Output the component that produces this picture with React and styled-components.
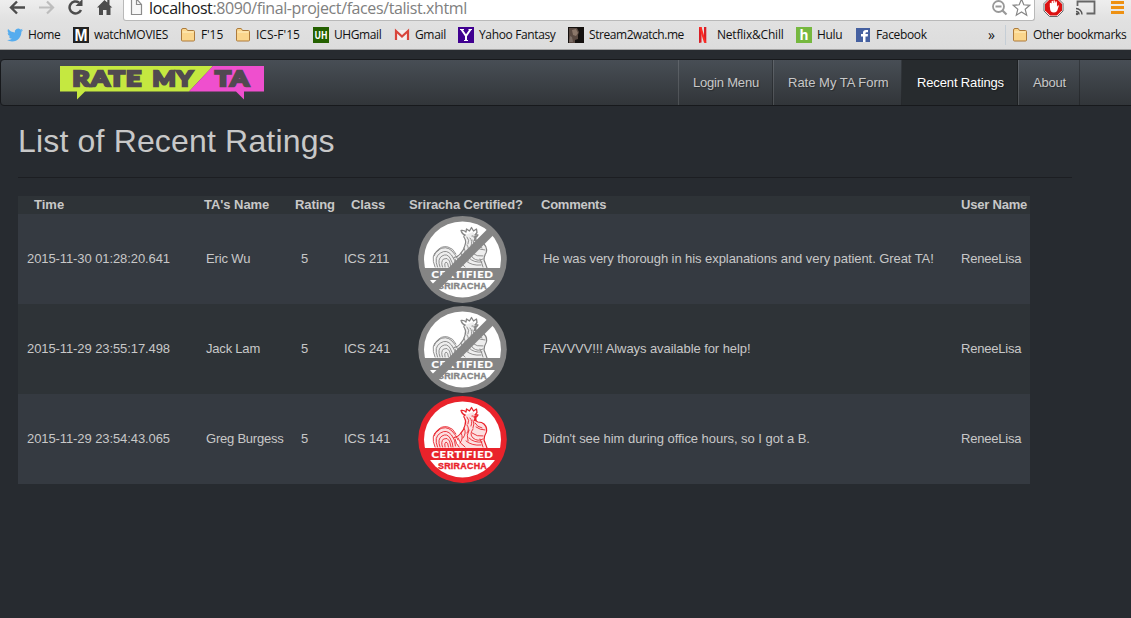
import React from "react";
import styled, { createGlobalStyle } from "styled-components";

const Global = createGlobalStyle`
  * { box-sizing: border-box; }
  body {
    margin: 0;
    background: #272b30;
    color: #c8c8c8;
    font-family: "Liberation Sans", Arial, sans-serif;
    font-size: 13px;
    overflow: hidden;
  }
`;

const Page = styled.div`
  width: 1131px;
  height: 618px;
  overflow: hidden;
`;

const Chrome = styled.header`
  height: 50px;
  display: flex;
  flex-direction: column;
  background: linear-gradient(#eeeeee, #e1e1e1 42%, #dcdcdc);
  border-bottom: 1px solid #a2a2a2;
  font-family: "Open Sans", "Noto Sans", sans-serif;
  color: #111;
`;

const Toolbar = styled.div`
  display: flex;
  height: 21px;
`;

const ToolGroup = styled.div`
  width: ${(p) => p.$width}px;
  flex: none;
  svg { display: block; }
`;

const AddressBar = styled.div`
  width: 912px;
  height: 21px;
  flex: none;
  display: flex;
  background: #fff;
  border: 1px solid #b9b9b9;
  border-top: 0;
  border-radius: 0 0 3px 3px;
`;

const Url = styled.div`
  flex: 1;
  font-size: 16px;
  line-height: 16px;
  letter-spacing: -0.4px;
  white-space: nowrap;
  color: #808080;
  b { font-weight: 400; color: #1a1a1a; }
`;

const Bookmarks = styled.nav`
  display: flex;
  height: 28px;
  padding-left: 7px;
  align-items: center;
`;

const Bookmark = styled.div`
  width: ${(p) => p.$width}px;
  flex: none;
  display: flex;
  align-items: center;
  gap: 5px;
  font-size: 12px;
  line-height: 18px;
  white-space: nowrap;
  letter-spacing: ${(p) => p.$track || 0}px;
  svg { flex: none; }
`;

const Chevron = styled.span`
  width: 17px;
  font-size: 14px;
  line-height: 20px;
`;

const Separator = styled.span`
  width: 1px;
  height: 20px;
  margin-right: 6px;
  background: #c5ced6;
`;

const Navbar = styled.nav`
  display: flex;
  height: 47px;
  margin: 9px -6px 0 0;
  padding-left: 59px;
  background: linear-gradient(#484e55, #3a3f44 60%, #313539);
  border: 1px solid #17191c;
  border-radius: 4px;
`;

const Brand = styled.div`
  width: 618px;
  padding-top: 6px;
  svg { display: block; }
`;

const NavItem = styled.a`
  width: ${(p) => p.$width}px;
  padding-left: 14px;
  line-height: 45px;
  white-space: nowrap;
  letter-spacing: ${(p) => p.$track || 0}px;
  color: ${(p) => (p.$active ? "#fff" : "#c8c8c8")};
  background: ${(p) => (p.$active ? "#272b2e" : "transparent")};
  border-left: 1px solid ${(p) => (p.$active ? "#272b2e" : "rgba(255,255,255,.13)")};
  border-right: 1px solid rgba(0, 0, 0, 0.25);
  text-shadow: 1px 1px 1px rgba(0, 0, 0, 0.3);
`;

const Content = styled.main`
  padding: 14px 59px 0 18px;
`;

const Title = styled.h1`
  margin: 0;
  height: 58px;
  font-size: 32px;
  font-weight: 400;
  line-height: 42px;
  letter-spacing: 0.17px;
  border-bottom: 1px solid #1c1e22;
`;

const Table = styled.div`
  width: 1012px;
  margin-top: 18px;
`;

const Row = styled.div`
  display: grid;
  grid-template-columns: 179px 93px 48px 62px 134px 420px 76px;
  height: ${(p) => (p.$head ? 18 : 90)}px;
  align-items: center;
  font-weight: ${(p) => (p.$head ? 700 : 400)};
  background: ${(p) => (p.$light ? "#353a41" : "#2e3337")};
`;

const Cell = styled.div`
  padding-left: ${(p) => p.$pad}px;
  padding-bottom: ${(p) => (p.$image ? 0 : 2)}px;
  white-space: nowrap;
  letter-spacing: ${(p) => p.$track || 0}px;
  svg { display: block; }
`;

const Folder = () => (
  <svg width="16" height="16" viewBox="0 0 16 16">
    <path d="M1.500 3q0-1.500 1.500-1.500h3.200L7.500 3.500H13.500q1 0 1 1v8.500q0 1-1 1h-11q-1 0-1-1z" fill="#fbd68c" stroke="#ad7b3c" />
    <path d="M2.500 5h11" stroke="#fff0c5" />
  </svg>
);

const Twitter = () => (
  <svg width="16" height="16" viewBox="0 0 24 24">
    <path fill="#55acee" d="M23.950 4.570a10 10 0 0 1-2.820.775 4.958 4.958 0 0 0 2.163-2.723c-.951.555-2.005.959-3.127 1.184a4.920 4.920 0 0 0-8.384 4.482C7.690 8.095 4.067 6.130 1.640 3.162a4.822 4.822 0 0 0-.666 2.475c0 1.710.870 3.213 2.188 4.096a4.904 4.904 0 0 1-2.228-.616v.060a4.923 4.923 0 0 0 3.946 4.827 4.996 4.996 0 0 1-2.212.085 4.936 4.936 0 0 0 4.604 3.417 9.867 9.867 0 0 1-6.102 2.105c-.390 0-.779-.023-1.170-.067a13.995 13.995 0 0 0 7.557 2.209c9.053 0 13.998-7.496 13.998-13.985 0-.210 0-.420-.015-.630A9.935 9.935 0 0 0 24 4.590z" />
  </svg>
);

const Tile = ({ fill, size = 12, color = "#fff", children, font = "Open Sans", y = 13, len, weight = 700 }) => (
  <svg width="16" height="16" viewBox="0 0 16 16" overflow="visible">
    <rect width="16" height="16" fill={fill} />
    <text x="8" y={y} textAnchor="middle" fontFamily={`${font}, sans-serif`} fontWeight={weight} fontSize={size} fill={color} textLength={len} letterSpacing="0" lengthAdjust="spacingAndGlyphs">{children}</text>
  </svg>
);

const GmailIcon = () => (
  <svg width="16" height="16" viewBox="0 0 16 16">
    <path d="M2 3h12v10H2z" fill="#f3eeee" />
    <path d="M2 13V4l6 5.500L14 4v9" fill="none" stroke="#d9453b" strokeWidth="2.200" />
  </svg>
);

const YahooIcon = () => (
  <svg width="16" height="16" viewBox="0 0 16 16">
    <path d="M0 0h16v16H0z" fill="#400090" />
    <path d="M3.500 2.500L8 9l4.500-6.500M8 8.500V13.500" fill="none" stroke="#fff" strokeWidth="2" />
    <path d="M2 2.500h4M10.500 2.500h3.500M6 13.500h4" stroke="#fff" />
  </svg>
);

const StreamIcon = () => (
  <svg width="16" height="16" viewBox="0 0 16 16">
    <path d="M0 0h16v16H0z" fill="#15110f" />
    <path d="M1 1h8l2 4-1 3v4l-3 1v3H1z" fill="#5a4a42" />
    <path d="M4 3l4-1 2 4-2 3-3-1z" fill="#8b776a" />
    <path d="M2 9l2 1 1 5H1z" fill="#796b64" />
  </svg>
);

const NetflixIcon = () => (
  <svg width="16" height="16" viewBox="0 0 16 16">
    <path d="M3 0h2.500v15.500L3 16zM8 0h2.300v16L8 15.500z" fill="#d81f26" />
    <path d="M3 0h2.500l4.800 16L8 15.500z" fill="#ff2a22" />
  </svg>
);

const FacebookIcon = () => (
  <svg width="16" height="16" viewBox="0 0 16 16">
    <rect x="1" y="1" width="14" height="14" fill="#4560a0" />
    <path d="M8 15V9.500H6V7h2V5.500Q8 3 11 3h2v2.300h-1.500q-1 0-1 1V7H13l-.3 2.500h-2.200V15z" fill="#fff" />
  </svg>
);

const NavIcons = () => (
  <svg width="123" height="21" viewBox="0 0 123 21">
    <path d="M25 7.500H11.500M17 1.500l-6 6 6 6" fill="none" stroke="#4c4c4c" strokeWidth="2.400" />
    <path d="M39 7.500h13.500M47 1.500l6 6-6 6" fill="none" stroke="#bdbdbd" strokeWidth="2.200" />
    <path d="M81 10A6 6 0 1 1 79 2.500" fill="none" stroke="#4c4c4c" strokeWidth="2.500" />
    <path d="M82.500-1v7h-7z" fill="#4c4c4c" />
    <path d="M104.500 0L97 7.500h2V15h4v-5h3.500v5h4V7.500h1.800L109.500 5V0h-2.200v2.500z" fill="#4c4c4c" />
  </svg>
);

const PageIcon = () => (
  <svg width="25" height="20" viewBox="0 0 25 20">
    <path d="M7.500-3V14.500h10V4.500L13-.5M12.500-2V4.500h5" fill="#f8f8f8" stroke="#8c8c8c" strokeWidth="1.200" />
  </svg>
);

const AddressIcons = () => (
  <svg width="45" height="20" viewBox="989 0 45 20">
    <circle cx="998.500" cy="6.500" r="5.500" fill="none" stroke="#999" strokeWidth="1.800" />
    <path d="M995.500 6.500h6M1002.500 10.500l4 4" stroke="#999" strokeWidth="2.200" />
    <path d="M1021.500-.8l2.300 5.600 6 .5-4.600 4 1.500 5.900-5.200-3.200-5.200 3.200 1.500-5.900-4.600-4 6-.5z" fill="#fff" stroke="#858585" strokeWidth="1.200" />
  </svg>
);

const ExtensionIcons = () => (
  <svg width="96" height="21" viewBox="1035 0 96 21">
    <path d="M1049.500-2h8l5.500 5.500v7.500l-5.500 5.500h-8L1044 11V3.500z" fill="#fff" stroke="#666" />
    <path d="M1050-1h7l5 5v6.500l-5 5h-7l-5-5V4z" fill="#dc1212" />
    <path d="M1050 3.500V8q0 4.500 4 4.500 2.500 0 3.300-2l1.500-4.500q0-1-1-.5l-1 1.500V2.500" fill="#fff" />
    <path d="M1050.500 7V3.500M1052.300 7V1.500M1054.200 7V1M1056.100 7V2" stroke="#fff" strokeWidth="1.400" strokeLinecap="round" />
    <path d="M1077.500 6V1.500h17v12h-8" fill="none" stroke="#666" strokeWidth="1.800" />
    <path d="M1076 8.500a6 6 0 0 1 6 6M1076 11.500a3 3 0 0 1 3 3" fill="none" stroke="#555" strokeWidth="1.400" />
    <circle cx="1077" cy="14" r="1.200" fill="#555" />
    <path d="M1111 2.500h13M1111 7.500h13M1111 12.500h13" stroke="#ee9112" strokeWidth="3" />
  </svg>
);

const Logo = () => (
  <svg width="206" height="35" viewBox="0 0 206 35">
    <path d="M0 0h153l-24 25.500H25L17 33.500v-8H0z" fill="#c5e840" />
    <path d="M153 0h51v25.500h-20v8l-8-8h-47z" fill="#ef4fce" />
    <g fontFamily="Lato, sans-serif" fontWeight="900" fontSize="21.500" letterSpacing="1" fill="#514950" stroke="#514950" strokeWidth="2.300">
      <text x="12.500" y="20.200" textLength="70" lengthAdjust="spacingAndGlyphs">RATE</text>
      <text x="92.500" y="20.200" textLength="41.500" lengthAdjust="spacingAndGlyphs">MY</text>
      <text x="155" y="20.200" textLength="35" lengthAdjust="spacingAndGlyphs">TA</text>
    </g>
  </svg>
);

const Stamp = ({ certified }) => {
  const c = certified ? "#e9232b" : "#858585";
  return (
    <svg width="89" height="88" viewBox="0 0 89 88">
      <ellipse cx="44.500" cy="44.400" rx="44.300" ry="43.500" fill={c} />
      <ellipse cx="44.500" cy="44.400" rx="38.500" ry="38" fill="#fff" />
      <path d="M47 20l8-3 4 6 0 4 7 2 3 5-3 9 2 10H36l7-6-4-5 6-5 3-9zM17 53q-3-18 9-21 8-1 11 6l2 15z" fill={c} opacity="0.140" />
      <g fill="none" stroke={c} strokeWidth="0.900" strokeLinecap="round" strokeLinejoin="round">
        <path d="M47 20q-3-1-4-4.500 3-.5 5 1.500l.5-3 3 2 2-3.500 2 3.500 3-2 .5 3.500-2 2.500 3 0-1 1.500-3 .5" strokeWidth="1.300" />
        <path d="M47 20q-2 1-.5 3 2 3 .5 7-1 5-4 8-3 4-7 4.500M58 22q-1 4 2 5 4 0 6 2 4 4 2 9-2 3-2 7l3 8M54 21h1M57 22l-.5 3.500 2 .5" strokeWidth="1.200" />
        <path d="M17 52q-5-12 3-17 8-5 14 1 4 4 6 9M19.500 52q-4-10 3-14 6-4 11 2 4 5 4 11M22 52q-3-8 2-11 5-3 8 2 3 5 3 9M24.500 52q-2-5 1-8 4-2 6 2l1.500 6M27 52q-1-4 1-5 2 0 2.500 5M18 37q5-7 12-5 5 1 8 7M16 41q1-4 5-6" />
        <path d="M49 22q3 3 1 7M52 23q3 3 1 8M55 25q2 4 0 8M49 30q3 4 0 8M46 33q3 5-1 10M43 38q3 5-1 10M57 28q2 4 7 5M58 32q4 3 9 3M55 34q-4 5 0 9 5 4 10 1M54 38q5 4 11 3M51 43q5 5 13 4M48 46q6 5 15 4M40 43q2 6 7 9M37 44q1 5 4 8M51 35q-3 5-1 11M62 44q2 4 3 8" />
      </g>
      <path d="M5.500 53h78l-4 12H9.500z" fill={c} />
      <text x="13.500" y="62.700" textLength="62" lengthAdjust="spacingAndGlyphs" fontFamily="Lato, sans-serif" fontWeight="900" fontSize="10" letterSpacing="0.600" fill="#fff" stroke="#fff" strokeWidth="0.200">CERTIFIED</text>
      <text x="20" y="74" textLength="49" lengthAdjust="spacingAndGlyphs" fontFamily="Liberation Sans, sans-serif" fontWeight="700" fontSize="9.800" letterSpacing="0.300" fill={c} stroke={c} strokeWidth="0.400">SRIRACHA</text>
      {!certified && <path d="M17 72.500L72.500 17" stroke={c} strokeWidth="8.500" />}
    </svg>
  );
};

const headings = [
  ["Time", 16, 0], ["TA's Name", 7, -0.05], ["Rating", 5, -0.1], ["Class", 13, -0.1],
  ["Sriracha Certified?", 9, -0.13], ["Comments", 7, -0.25], ["User Name", 7, -0.2],
];

const ratings = [
  { time: "2015-11-30 01:28:20.641", name: "Eric Wu", cls: "ICS 211", certified: false, comment: "He was very thorough in his explanations and very patient. Great TA!", track: -0.07, nameTrack: -0.15 },
  { time: "2015-11-29 23:55:17.498", name: "Jack Lam", cls: "ICS 241", certified: false, comment: "FAVVVV!!! Always available for help!", track: -0.07, nameTrack: -0.2 },
  { time: "2015-11-29 23:54:43.065", name: "Greg Burgess", cls: "ICS 141", certified: true, comment: "Didn't see him during office hours, so I got a B.", track: -0.04, nameTrack: -0.22 },
];

const bookmarks = [
  ["Home", 66, <Twitter />, -0.4],
  ["watchMOVIES", 107, <Tile fill="#222" size={16} y={14} len={13} font="Liberation Sans">M</Tile>, -0.3],
  ["F'15", 55, <Folder />, -0.1],
  ["ICS-F'15", 78, <Folder />, 0],
  ["UHGmail", 81, <Tile fill="#246000" size={11} y={12} len={13}>UH</Tile>, -0.4],
  ["Gmail", 64, <GmailIcon />, -0.35],
  ["Yahoo Fantasy", 110, <YahooIcon />, -0.36],
  ["Stream2watch.me", 128, <StreamIcon />, -0.44],
  ["Netflix&Chill", 100, <NetflixIcon />, -0.2],
  ["Hulu", 59, <Tile fill="#76b83f" size={15} y={13} len={9}>h</Tile>, -0.35],
  ["Facebook", 133, <FacebookIcon />, -0.35],
];

export default function App() {
  return (
    <Page>
      <Global />
      <Chrome>
        <Toolbar>
          <ToolGroup $width={123}><NavIcons /></ToolGroup>
          <AddressBar>
            <PageIcon />
            <Url><b>localhost</b>:8090/final-project/faces/talist.xhtml</Url>
            <AddressIcons />
          </AddressBar>
          <ToolGroup $width={96}><ExtensionIcons /></ToolGroup>
        </Toolbar>
        <Bookmarks>
          {bookmarks.map(([label, width, icon, track]) => (
            <Bookmark key={label} $width={width} $track={track}>{icon}<span>{label}</span></Bookmark>
          ))}
          <Chevron>»</Chevron>
          <Separator />
          <Bookmark $width={119} $track={-0.35}><Folder /><span>Other bookmarks</span></Bookmark>
        </Bookmarks>
      </Chrome>
      <Navbar>
        <Brand><Logo /></Brand>
        <NavItem $width={95} $track={-0.2}>Login Menu</NavItem>
        <NavItem $width={129}>Rate My TA Form</NavItem>
        <NavItem $width={116} $track={-0.14} $active>Recent Ratings</NavItem>
        <NavItem $width={62} $track={-0.2}>About</NavItem>
      </Navbar>
      <Content>
        <Title>List of Recent Ratings</Title>
        <Table>
          <Row $head>
            {headings.map(([label, pad, track]) => <Cell key={label} $pad={pad} $track={track}>{label}</Cell>)}
          </Row>
          {ratings.map((r, i) => (
            <Row key={r.time} $light={i % 2 === 0}>
              <Cell $pad={9} $track={-0.09}>{r.time}</Cell>
              <Cell $pad={9} $track={r.nameTrack}>{r.name}</Cell>
              <Cell $pad={11}>5</Cell>
              <Cell $pad={6} $track={-0.1}>{r.cls}</Cell>
              <Cell $pad={18} $image><Stamp certified={r.certified} /></Cell>
              <Cell $pad={9} $track={r.track}>{r.comment}</Cell>
              <Cell $pad={7} $track={-0.22}>ReneeLisa</Cell>
            </Row>
          ))}
        </Table>
      </Content>
    </Page>
  );
}
